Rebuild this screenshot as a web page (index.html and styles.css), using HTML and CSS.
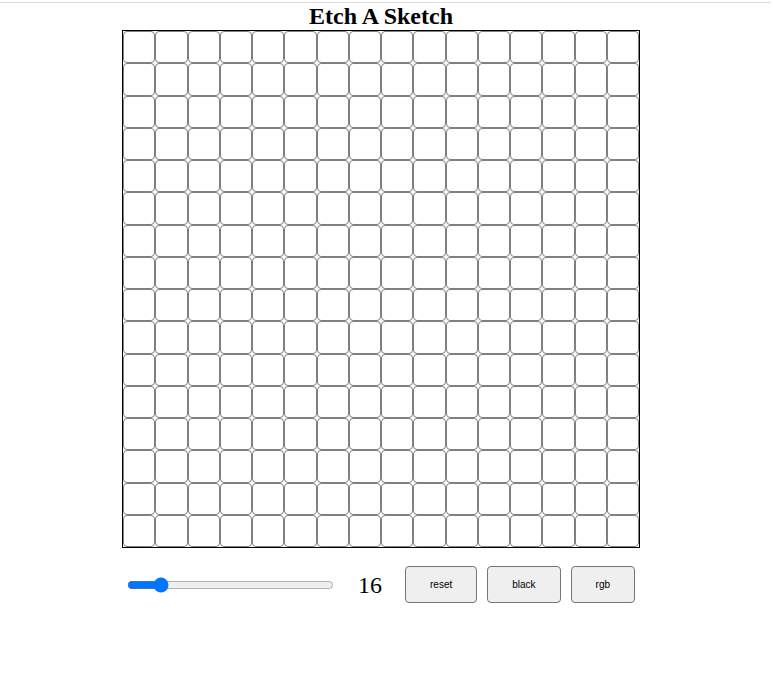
FILE: index.html
```html
<!DOCTYPE html>
<html>
<head>
<meta charset="utf-8">
<title>Etch A Sketch</title>
<link rel="stylesheet" href="styles.css">
</head>
<body>
<div class="topline"></div>
<div class="page">
  <h1 class="title">Etch A Sketch</h1>
  <div class="board" id="board"></div>
  <div class="controls">
    <input class="slider" type="range" min="1" max="110" value="16">
    <span class="size">16</span>
    <button class="btn btn-first">reset</button>
    <button class="btn">black</button>
    <button class="btn">rgb</button>
  </div>
</div>
<script src="script.js"></script>
</body>
</html>
```
FILE: script.js
```js
const board = document.getElementById('board');
for (let i = 0; i < 256; i++) {
  const c = document.createElement('div');
  c.className = 'cell';
  board.appendChild(c);
}
```
FILE: styles.css
```css
html, body {
  margin: 0;
  padding: 0;
  background: #ffffff;
}
.topline {
  height: 1px;
  margin-top: 2px;
  background: #dedede;
  width: 771px;
}
.page {
  width: 762px;
  display: flex;
  flex-direction: column;
  align-items: center;
}
.title {
  margin: 0;
  font-family: "Liberation Serif", "Times New Roman", serif;
  font-size: 24px;
  font-weight: bold;
  line-height: 27px;
  color: #000;
}
.board {
  width: 516px;
  height: 516px;
  border: 1px solid #000;
  display: grid;
  grid-template-columns: repeat(16, 1fr);
  grid-template-rows: repeat(16, 1fr);
}
.cell {
  border: 1px solid #808080;
  border-radius: 4px;
  box-sizing: border-box;
}
.controls {
  width: 518px;
  margin-top: 18px;
  display: flex;
  align-items: center;
}
.slider {
  width: 207px;
  margin: 0 0 0 5px;
}
.size {
  margin-left: 24px;
  font-family: "Liberation Serif", "Times New Roman", serif;
  font-size: 24px;
  line-height: 28px;
  color: #000;
}
.btn {
  height: 37px;
  padding: 0 24px;
  margin-left: 10px;
  font-family: "Liberation Sans", Arial, sans-serif;
  font-size: 10px;
  color: #000;
  background: #efefef;
  border: 1px solid #767676;
  border-radius: 4px;
}
.btn-first {
  margin-left: 23px;
}
```
